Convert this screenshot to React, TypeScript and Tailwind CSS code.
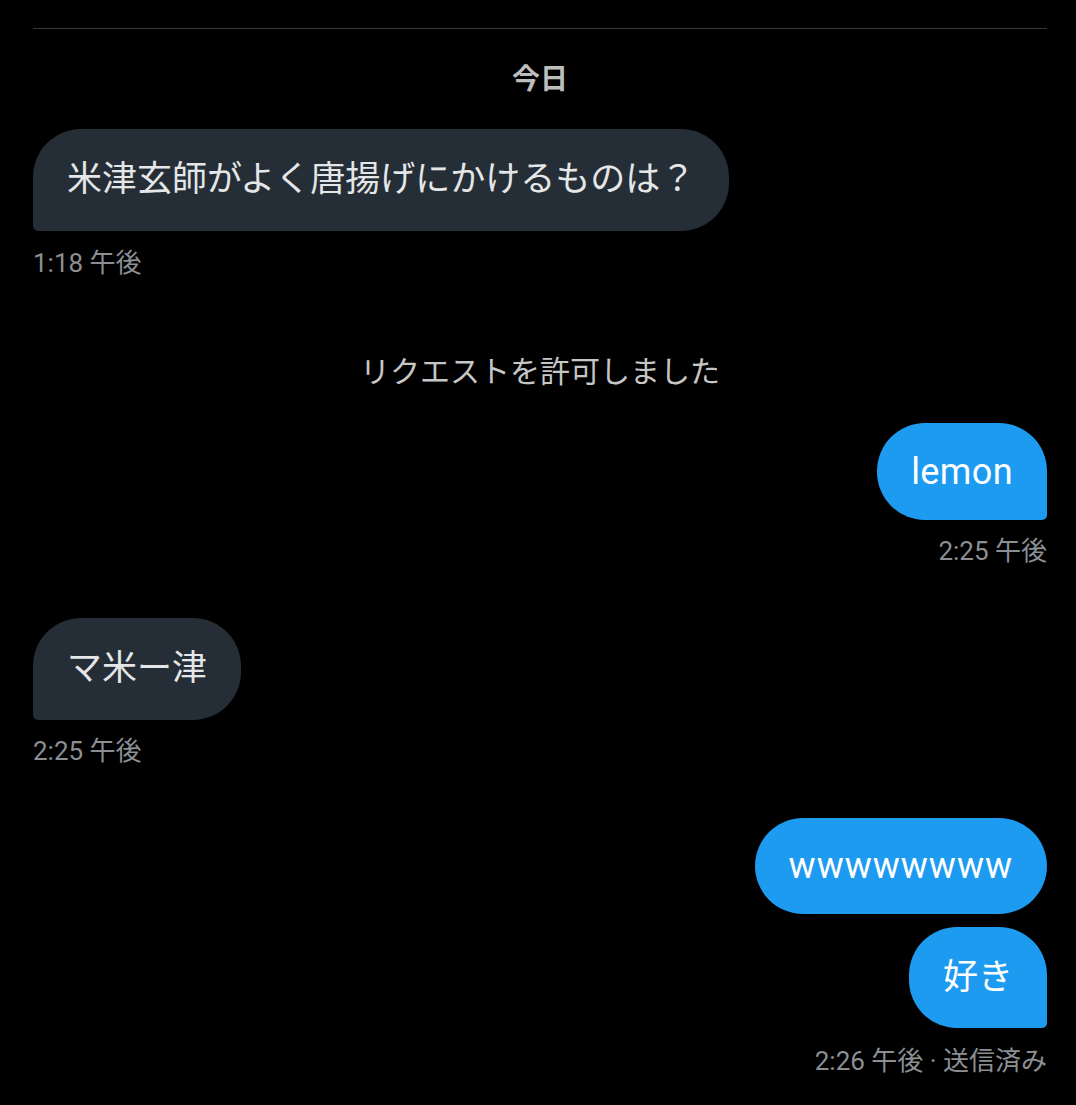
import React from "react";

const font = { fontFamily: 'Roboto, "Noto Sans CJK JP", sans-serif' };

function Bubble({
  text,
  mine,
  tail,
  leading,
  extra = "text-[35px]",
}: {
  text: string;
  mine: boolean;
  tail: boolean;
  leading: string;
  extra?: string;
}) {
  const base =
    "px-[34px] py-[28px] whitespace-nowrap " + extra + " " + leading + " ";
  const color = mine ? "bg-[#1d9bf0] text-white " : "bg-[#252e36] text-[#e4e6e8] ";
  const radius = mine
    ? tail
      ? "rounded-[48px] rounded-br-[5px]"
      : "rounded-[48px]"
    : tail
    ? "rounded-[48px] rounded-bl-[5px]"
    : "rounded-[48px]";
  return <div className={base + color + radius}>{text}</div>;
}

function Stamp({ text, right }: { text: string; right?: boolean }) {
  return (
    <div
      className={
        "text-[26px] leading-[34px] text-[#8b8f93] " + (right ? "self-end" : "self-start")
      }
    >
      {text}
    </div>
  );
}

export default function App() {
  return (
    <div className="min-h-[1105px] w-full bg-black" style={font}>
      <div className="flex flex-col pl-[33px] pr-[29px] pt-[28px]">
        <div className="h-px w-full bg-[#38393b]" />
        <div className="mt-[31px] self-center text-[28px] font-bold leading-[40px] text-[#bdbdbd]">
          今日
        </div>
        <div className="mt-[29px] self-start">
          <Bubble text="米津玄師がよく唐揚げにかけるものは？" mine={false} tail leading="leading-[46px]" />
        </div>
        <div className="mt-[15px]">
          <Stamp text="1:18 午後" />
        </div>
        <div className="mt-[72px] self-center text-[30px] leading-[40px] text-[#c6c6c6]">
          リクエストを許可しました
        </div>
        <div className="mt-[31px] self-end">
          <Bubble
            text="lemon"
            mine
            tail
            leading="leading-[41px]"
            extra="text-[36px] tracking-[0.4px] pt-[29px] pb-[27px]"
          />
        </div>
        <div className="mt-[14px] flex flex-col">
          <Stamp text="2:25 午後" right />
        </div>
        <div className="mt-[50px] self-start">
          <Bubble text="マ米ー津" mine={false} tail leading="leading-[46px]" />
        </div>
        <div className="mt-[14px]">
          <Stamp text="2:25 午後" />
        </div>
        <div className="mt-[50px] self-end">
          <Bubble
            text="wwwwwwww"
            mine
            tail={false}
            leading="leading-[40px]"
            extra="text-[36px] tracking-[1px]"
          />
        </div>
        <div className="mt-[13px] self-end">
          <Bubble text="好き" mine tail leading="leading-[45px]" />
        </div>
        <div className="mt-[16px] flex flex-col">
          <Stamp text="2:26 午後 · 送信済み" right />
        </div>
      </div>
    </div>
  );
}
